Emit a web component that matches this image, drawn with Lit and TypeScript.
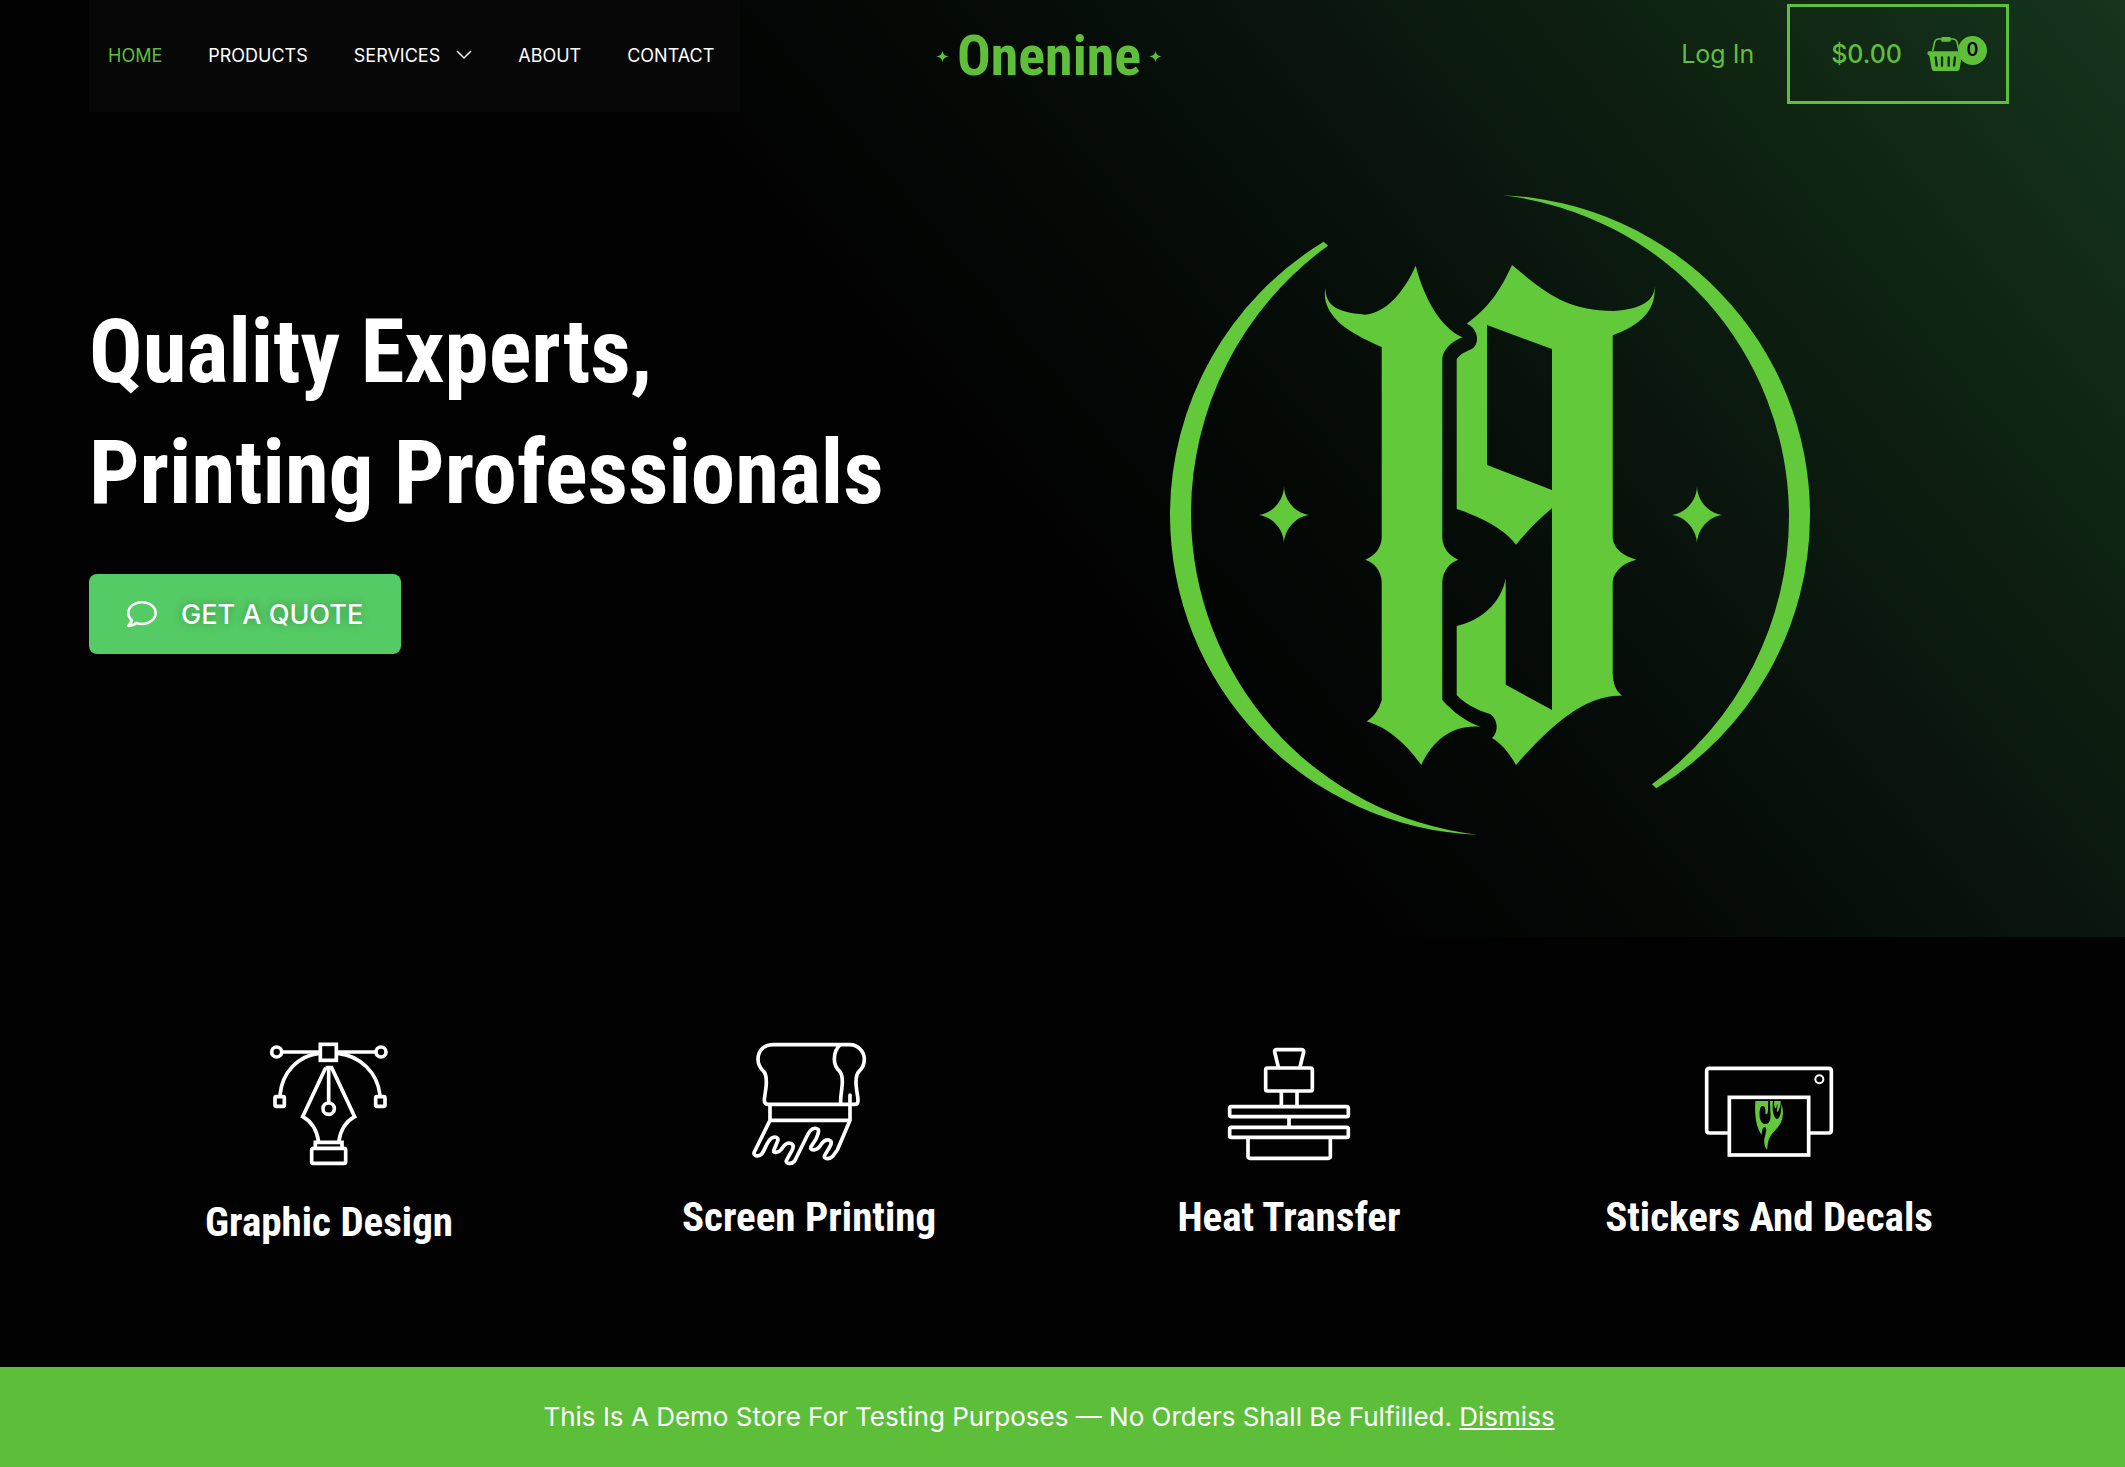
import { LitElement, html, svg, css } from "lit";
import { customElement } from "lit/decorators.js";

const star = svg`<path d="M12 0C12 7 16 11 24 12C16 13 12 17 12 24C12 17 8 13 0 12C8 11 12 7 12 0Z" fill="currentColor"/>`;

const penIcon = html`<svg class="art tall" viewBox="222 60 450 405" aria-hidden="true">
  <g fill="none" stroke="currentColor" stroke-width="11">
    <circle cx="290" cy="99" r="15"/><circle cx="603" cy="99" r="15"/>
    <path d="M306 99H417M473 99H587"/>
    <rect x="421" y="76" width="48" height="48"/>
    <path d="M417 103C355 110 306 160 300 228M473 103C540 110 592 160 600 228"/>
    <rect x="285" y="233" width="28" height="29" rx="4"/><rect x="587" y="233" width="28" height="29" rx="4"/>
    <path d="M437 146H455L524 293C496 308 481 335 476 369M437 146L368 293C396 308 411 335 416 369"/>
    <path d="M446 146V250"/><circle cx="446" cy="269" r="17"/>
    <path d="M406 388V370H486V388"/>
    <rect x="395" y="388" width="102" height="45" rx="5"/>
  </g></svg>`;

const squeegeeIcon = html`<svg class="art" viewBox="222 60 450 390" aria-hidden="true">
  <g fill="none" stroke="currentColor" stroke-width="11" stroke-linecap="round" stroke-linejoin="round">
    <path d="M541 77H340C306 77 294 101 294 121C294 139 302 149 311 157C318 164 319 176 319 190C319 211 313 231 313 244Q313 256 324 256H584Q594 256 594 245C594 231 588 211 588 190C588 176 590 164 597 157C606 149 613 139 613 121C613 99 595 77 569 77H541C530 86 523 103 523 121C523 139 530 149 539 157C546 164 547 176 547 190C547 208 541 230 542 250"/>
    <path d="M570 228V304H330V258M330 304L283 399C278 411 294 414 304 406C314 396 320 368 334 358C345 350 357 356 353 366L342 392C337 405 356 401 364 391C374 375 381 370 391 373C402 376 401 384 396 394L379 425C376 434 395 437 404 426L444 345C452 329 465 323 475 332C478 340 472 350 468 360L453 383C448 397 468 395 478 384C488 368 495 360 506 363C517 366 515 374 509 384L494 409C489 421 509 422 518 412L532 393L570 304"/>
  </g></svg>`;

const pressIcon = html`<svg class="art" viewBox="162 60 450 390" aria-hidden="true">
  <g fill="none" stroke="currentColor" stroke-width="11" stroke-linejoin="round">
    <path d="M355 144L344 99Q343 92 350 92H424Q432 92 431 99L420 144"/>
    <rect x="317" y="147" width="140" height="69" rx="5"/>
    <path d="M364 219V260M411 219V260M387 297V322"/>
    <rect x="209" y="263" width="356" height="30" rx="5"/>
    <rect x="209" y="325" width="356" height="30" rx="5"/>
    <path d="M264 358V412Q264 418 270 418H504Q511 418 511 412V358"/>
  </g></svg>`;

const decalIcon = html`<svg class="art" viewBox="312 0 450 390" aria-hidden="true">
  <g fill="none" stroke="currentColor" stroke-width="11">
    <path d="M418 282H358Q350 282 350 274V96Q350 88 358 88H716Q724 88 724 96V274Q724 282 716 282H656"/>
    <circle cx="688" cy="121" r="12" stroke-width="6"/>
    <rect x="418" y="175" width="238" height="173"/>
  </g>
  <path fill="#62ca3a" d="M496 186H534V212C534 226 528 230 526 222C528 208 523 200 517 201C510 202 508 216 509 234C511 250 520 257 530 255C540 252 543 238 541 218L540 186H549C546 208 549 234 560 240C570 240 574 220 574 194C581 212 580 234 573 250C565 268 546 280 538 298C532 310 534 320 531 332C525 326 521 314 523 300C526 285 533 268 525 264C517 264 516 276 515 288C499 264 493 232 496 186ZM553 186H572C573 198 568 212 562 220C558 216 564 202 562 194C560 200 560 208 556 208C552 202 552 194 553 186Z"/></svg>`;

const services = [
  { title: "Graphic Design", icon: penIcon },
  { title: "Screen Printing", icon: squeegeeIcon },
  { title: "Heat Transfer", icon: pressIcon },
  { title: "Stickers And Decals", icon: decalIcon },
];

const links = ["HOME", "PRODUCTS", "SERVICES", "ABOUT", "CONTACT"];

@customElement("app-root")
export class AppRoot extends LitElement {
  static styles = css`
    :host {
      display: block;
      min-height: 100vh;
      background: #020202;
      color: #fff;
      font-family: Inter, "Open Sans", sans-serif;
      --green: #5fbf3a;
      --condensed: "Roboto Condensed", Roboto, sans-serif;
    }
    * { box-sizing: border-box; }
    a { color: inherit; text-decoration: none; }
    svg { display: block; flex: none; }
    .page { display: flex; flex-direction: column; min-height: 100vh; }
    .hero {
      padding: 0 116px 102px 89px;
      background: linear-gradient(230deg, #15351d 0%, #0f2411 15%, #0a170e 27%, #050b07 39%, #020202 53%);
    }
    .header {
      display: grid;
      grid-template-columns: 1fr auto 1fr;
      align-items: center;
      height: 112px;
    }
    .nav {
      justify-self: start;
      align-self: stretch;
      display: flex;
      align-items: center;
      gap: 46px;
      padding: 0 26px 2px 19px;
      background: #070707;
      font-size: 18px;
    }
    .nav a { display: flex; align-items: center; gap: 16px; }
    .nav .current { color: var(--green); }
    .brand {
      display: flex;
      align-items: center;
      gap: 8px;
      color: var(--green);
    }
    .word {
      font: bold 56px/64px var(--condensed);
    }
    .account {
      justify-self: end;
      align-self: start;
      display: flex;
      align-items: center;
      gap: 33px;
      margin-top: 4px;
      color: var(--green);
      font-size: 25px;
    }
    .cart {
      display: flex;
      align-items: center;
      gap: 25px;
      height: 100px;
      padding: 0 43px 0 41px;
      border: 3px solid var(--green);
      font-weight: 500;
    }
    .basket { position: relative; }
    .count {
      position: absolute;
      left: 31px;
      top: 0;
      width: 29px;
      height: 29px;
      border-radius: 50%;
      background: var(--green);
      color: #000;
      font: 600 18px/27px Inter, sans-serif;
      text-align: center;
      box-shadow: 1px 1px 3px rgba(0, 0, 0, 0.3);
    }
    .main {
      display: grid;
      grid-template-columns: 459fr 541fr;
      padding-top: 83px;
    }
    .pitch { padding-top: 96px; }
    h1 {
      margin: 0 0 41px;
      font: bold 89px/121px var(--condensed);
    }
    .quote {
      display: inline-flex;
      align-items: center;
      gap: 24px;
      height: 80px;
      padding: 0 38px;
      border-radius: 8px;
      background: #54cb64;
      font-size: 27px;
      font-weight: 500;
      text-shadow: 0 0 10px rgba(0, 0, 0, 0.3);
    }
    .emblem {
      justify-self: center;
      width: 640px;
      max-width: 100%;
      color: #62ca3a;
    }
    .services {
      display: grid;
      grid-template-columns: repeat(4, 1fr);
      flex: 1;
      padding: 102px 116px 106px 89px;
    }
    .service { display: flex; flex-direction: column; align-items: center; }
    .art { width: 150px; height: 130px; }
    .tall { height: 135px; }
    h2 {
      margin: 25px 0 0;
      font: bold 41px/46px var(--condensed);
      text-align: center;
    }
    .notice {
      display: flex;
      align-items: center;
      justify-content: center;
      margin: 0;
      min-height: 100px;
      padding: 0 116px 2px 89px;
      background: #5dbe39;
      font-size: 26px;
      text-align: center;
    }
    .notice a { text-decoration: underline; }
  `;

  render() {
    return html`
      <div class="page">
        <section class="hero">
          <header class="header">
            <nav class="nav" aria-label="Main">
              ${links.map(
                (l) => html`<a href="#" class=${l === "HOME" ? "current" : ""}>${l}${l === "SERVICES"
                  ? html`<svg width="16" height="10" viewBox="0 0 16 10" fill="none" stroke="currentColor" stroke-width="1.500" aria-hidden="true"><path d="M1 1L8 8L15 1"/></svg>`
                  : ""}</a>`
              )}
            </nav>
            <a class="brand" href="#">
              <svg width="13" height="13" viewBox="0 0 24 24" aria-hidden="true">${star}</svg>
              <span class="word">Onenine</span>
              <svg width="13" height="13" viewBox="0 0 24 24" aria-hidden="true">${star}</svg>
            </a>
            <div class="account">
              <a href="#">Log In</a>
              <a class="cart" href="#">
                <span>$0.00</span>
                <span class="basket">
                  <svg width="36" height="36" viewBox="860 105 108 108" fill="none" stroke="currentColor" aria-hidden="true">
                    <path d="M877 150L883 123Q886 114 895 114H938Q947 114 950 123L956 150" stroke-width="5"/>
                    <rect x="903" y="108" width="28" height="14" rx="3" fill="currentColor" stroke="none"/>
                    <path fill="currentColor" stroke="none" d="M866 151H964Q968 151 968 157Q968 163 964 164L958 203Q957 210 950 210H882Q875 210 874 203L867 164Q861 163 861 157Q861 151 866 151Z"/>
                    <path d="M886 169L889 194M905 169V194M925 169V194M944 169L941 194" stroke="#122a17" stroke-width="7" stroke-linecap="round"/>
                  </svg>
                  <span class="count">0</span>
                </span>
              </a>
            </div>
          </header>
          <div class="main">
            <div class="pitch">
              <h1>Quality Experts,<br />Printing Professionals</h1>
              <a class="quote" href="#">
                <svg width="30" height="30" viewBox="0 0 512 512" fill="currentColor" aria-hidden="true"><path d="M256 32C114.600 32 0 125.100 0 240c0 47.600 19.900 91.200 52.900 126.300C38 405.700 7 439.100 6.500 439.500c-6.600 7-8.400 17.200-4.600 26S14.400 480 24 480c61.500 0 110-25.700 139.100-46.300C192 442.800 223.200 448 256 448c141.400 0 256-93.100 256-208S397.400 32 256 32zm0 372c-26.700 0-53.100-4.100-78.400-12.100l-22.700-7.200-19.500 13.800c-14.300 10.100-33.900 21.400-57.500 29 7.300-12.100 14.400-25.700 19.900-40.200l10.600-28.100-20.600-21.800C69.700 318.100 44 282.200 44 240c0-92 95.300-164 212-164s212 72 212 164-95.300 164-212 164z"/></svg>
                GET A QUOTE
              </a>
            </div>
            <svg class="emblem" viewBox="0 0 640 640" fill="currentColor" role="img" aria-label="Onenine emblem">
              <path d="M153.700 46.700A320 320 0 0 0 0 320A320 320 0 0 0 307 639.700A324 324 0 0 1 21 320A331 331 0 0 1 158 50.700Z"/>
              <path transform="rotate(180 320 320)" d="M153.700 46.700A320 320 0 0 0 0 320A320 320 0 0 0 307 639.700A324 324 0 0 1 21 320A331 331 0 0 1 158 50.700Z"/>
              <path d="M114 291C114 304 124 318 139 320C124 322 114 336 114 349C114 336 104 322 89 320C104 318 114 304 114 291Z"/>
              <path d="M527 291C527 304 537 318 552 320C537 322 527 336 527 349C527 336 517 322 502 320C517 318 527 304 527 291Z"/>
              <path d="M245.700 70.700C254 103 270 132 292.300 142.300C280 147 273 156 272.300 163.300V343.300C273 353 279 361 288.300 364.700C279 368 273 376 272.300 386.700V505C283 517 296 527 310.700 531.700C284 529 263 544 251.300 570C236 549 219 533 196.700 526.300C205 521 209 514 211.700 505V386.700C211 376 205 368 195.300 364.700C205 361 211 353 211.700 343.300V152C190 143 175 133 170 128.300C159 118 153 107 155.300 93.300C156 110 165 117 195 119.700C215 118 233 99 245.700 70.700Z"/>
              <path fill-rule="evenodd" d="M296.700 128.700C320 111 330 96 342 70C380 102 399 115 443.300 116C466 115 486 108 484.300 90C487 112 474 129 442.700 140.300V343.300C444 354 453 361 466.300 364.700C453 368 444 376 442.700 386.700V478.300C443 489 446 496 452 500.700C415 499 379 532 346 570C339 558 332 549 322 543C329 537 328 524 320 519C306 515 294 508 286.700 500V431C312 425 331 408 335.700 383.300V489.700L382 515V313.300C368 325 357 336 346 349.700C334 333 308 321 286.700 314V164.300C290 159 295 157 301.700 154C310 149 309 134 296.700 128.700ZM317 130L382 154V295L317 270Z"/>
            </svg>
          </div>
        </section>
        <section class="services">
          ${services.map((s) => html`<div class="service">${s.icon}<h2>${s.title}</h2></div>`)}
        </section>
        <p class="notice"><span>This Is A Demo Store For Testing Purposes — No Orders Shall Be Fulfilled. <a href="#">Dismiss</a></span></p>
      </div>
    `;
  }
}
